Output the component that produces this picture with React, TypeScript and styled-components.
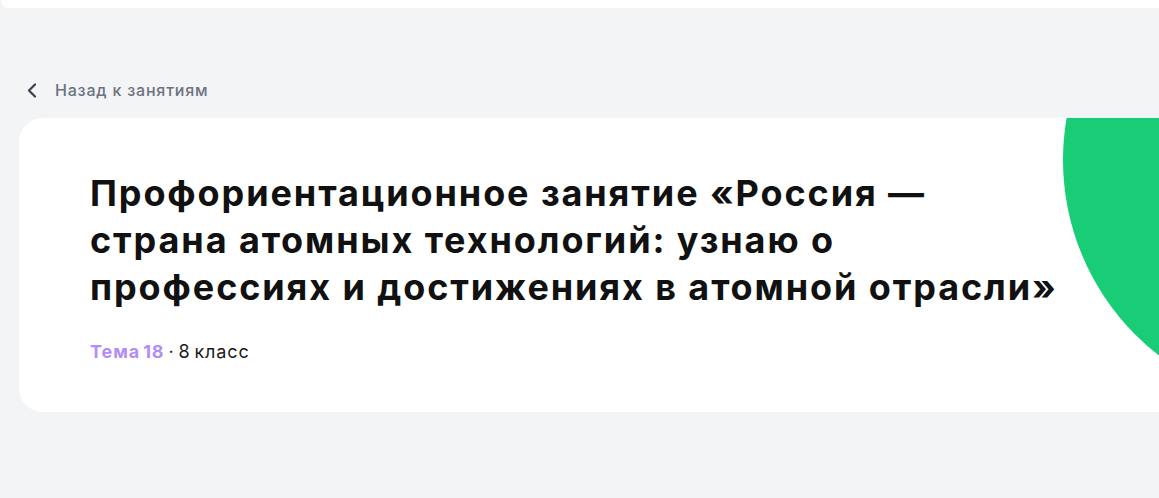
import React from "react";
import styled, { createGlobalStyle } from "styled-components";

const GlobalStyle = createGlobalStyle`
  html, body {
    margin: 0;
    padding: 0;
    background: #f3f4f6;
    font-family: Inter, "Noto Sans", sans-serif;
  }
`;

const Page = styled.div`
  width: 1159px;
  height: 498px;
  overflow: hidden;
  display: flex;
  flex-direction: column;
`;

const PrevCard = styled.div`
  height: 8px;
  margin-left: 1px;
  background: #ffffff;
  border-bottom-left-radius: 14px;
`;

const BackLink = styled.a`
  display: flex;
  align-items: center;
  gap: 18px;
  margin: 71px 0 0 27px;
  height: 22px;
  color: #6b7280;
  font-size: 16px;
  font-weight: 500;
  letter-spacing: 0.8px;
  text-decoration: none;
  cursor: pointer;

  svg {
    flex: none;
  }
`;

const Card = styled.section`
  position: relative;
  overflow: hidden;
  margin: 17px 0 0 19px;
  height: 294px;
  background: #ffffff;
  border-radius: 24px 0 0 24px;
  padding: 52px 0 0 71px;
  box-sizing: border-box;
`;

const Blob = styled.div`
  position: absolute;
  left: 1044px;
  top: -205px;
  width: 494px;
  height: 494px;
  border-radius: 50%;
  background: #18cd75;
`;

const Title = styled.h1`
  position: relative;
  margin: 0;
  max-width: 1000px;
  font-size: 36px;
  line-height: 47px;
  font-weight: 700;
  color: #111111;
  letter-spacing: 1.9px;
`;

const Meta = styled.div`
  margin-top: 29px;
  font-size: 18px;
  line-height: 24px;
  letter-spacing: 0.9px;
  word-spacing: -2px;
  color: #1a1a1a;
`;

const Topic = styled.span`
  color: #b48cf6;
  font-weight: 700;
`;

export default function App() {
  return (
    <>
      <GlobalStyle />
      <Page>
        <PrevCard />
        <BackLink>
          <svg width="10" height="15" viewBox="0 0 10 15" fill="none">
            <path
              d="M8 1.5L2 7.5l6 6"
              stroke="#374151"
              strokeWidth="2.2"
              strokeLinecap="round"
              strokeLinejoin="round"
            />
          </svg>
          Назад к занятиям
        </BackLink>
        <Card>
          <Blob />
          <Title>
            Профориентационное занятие «Россия —
            <br />
            страна атомных технологий: узнаю о
            <br />
            профессиях и достижениях в атомной отрасли»
          </Title>
          <Meta>
            <Topic>Тема 18</Topic> · 8 класс
          </Meta>
        </Card>
      </Page>
    </>
  );
}
